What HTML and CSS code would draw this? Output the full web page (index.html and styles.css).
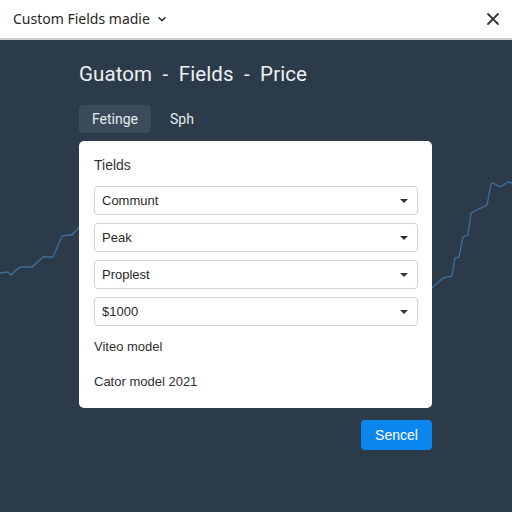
FILE: index.html
```html
<!DOCTYPE html>
<html>
<head>
<meta charset="utf-8">
<link rel="stylesheet" href="styles.css">
</head>
<body>
<header class="topbar">
  <div class="topbar-title">Custom Fields madie
    <svg class="chev" width="10" height="6" viewBox="0 0 10 6"><path d="M1.5 1.2 L5 4.6 L8.5 1.2" fill="none" stroke="#333" stroke-width="1.6"/></svg>
  </div>
  <svg class="close" width="14" height="14" viewBox="0 0 14 14"><path d="M2 2 L12 12 M12 2 L2 12" stroke="#333" stroke-width="1.8" stroke-linecap="round"/></svg>
</header>
<main class="main">
  <svg class="chart" width="512" height="472" viewBox="0 40 512 472" preserveAspectRatio="none">
    <polyline fill="none" stroke="#3f6f99" stroke-width="1.3" points="0,273 8,272 11,275 20,267 32,267 43,257 53,257 62,236 68,235 72,235 80,226"/>
    <polyline fill="none" stroke="#3f6f99" stroke-width="1.3" points="430,289 433,287 443,278 452,276 455,258 459,257 463,237 468,235 471,213 487,205 491,184 493,183 500,187 508,182 512,183"/>
  </svg>
  <div class="content">
    <h1 class="title">Guatom &nbsp;-&nbsp; Fields &nbsp;-&nbsp; Price</h1>
    <nav class="tabs">
      <span class="tab active">Fetinge</span>
      <span class="tab">Sph</span>
    </nav>
    <section class="card">
      <div class="card-label">Tields</div>
      <div class="select"><span>Communt</span><i class="caret"></i></div>
      <div class="select"><span>Peak</span><i class="caret"></i></div>
      <div class="select"><span>Proplest</span><i class="caret"></i></div>
      <div class="select"><span>$1000</span><i class="caret"></i></div>
      <div class="line first">Viteo model</div>
      <div class="line">Cator model 2021</div>
    </section>
    <div class="actions">
      <button class="btn">Sencel</button>
    </div>
  </div>
</main>
</body>
</html>
```

FILE: styles.css
```css
html, body {
  margin: 0;
  padding: 0;
  width: 512px;
  height: 512px;
  overflow: hidden;
  background: #2c3b4a;
}
body {
  font-family: "Liberation Sans", Arial, sans-serif;
  display: flex;
  flex-direction: column;
}
.topbar {
  height: 38px;
  background: #ffffff;
  border-bottom: 2px solid #c9ced3;
  display: flex;
  align-items: center;
  justify-content: space-between;
  padding: 0 13px 0 13px;
  flex-shrink: 0;
}
.topbar-title {
  font-family: "Noto Sans", "Open Sans", sans-serif;
  font-size: 14px;
  color: #262626;
  display: flex;
  align-items: center;
  gap: 7px;
  margin-top: -1px;
}
.chev { margin-top: 1px; }
.close { margin-right: -1px; }
.main {
  position: relative;
  flex: 1;
  background: #2c3b4a;
}
.chart {
  position: absolute;
  left: 0;
  top: 0;
  z-index: 0;
}
.content {
  position: relative;
  z-index: 1;
  padding: 0 80px 0 79px;
  display: flex;
  flex-direction: column;
}
.title {
  font-family: "Roboto", "Noto Sans", sans-serif;
  font-weight: 400;
  font-size: 20.5px;
  color: #eef1f4;
  margin: 21px 0 0 0;
  line-height: 26px;
  letter-spacing: 0.1px;
  white-space: nowrap;
}
.tabs {
  display: flex;
  gap: 6px;
  margin-top: 18px;
}
.tab {
  font-family: "Roboto", "Noto Sans", sans-serif;
  font-size: 14px;
  color: #e6eaee;
  padding: 0 13px;
  height: 28px;
  line-height: 28px;
  border-radius: 4px;
}
.tab.active {
  background: #3b4b5b;
}
.card {
  margin-top: 8px;
  background: #ffffff;
  border-radius: 5px;
  padding: 15px 14px 15px 15px;
  display: flex;
  flex-direction: column;
  gap: 8px;
  height: 237px;
}
.card-label {
  font-size: 14px;
  color: #333;
  line-height: 18px;
  margin-bottom: 4px;
}
.select {
  height: 27px;
  border: 1px solid #cfd2d6;
  border-radius: 4px;
  display: flex;
  align-items: center;
  justify-content: space-between;
  padding: 0 9px 0 7px;
  font-size: 13px;
  color: #2a2a2a;
}
.caret {
  width: 0;
  height: 0;
  border-left: 4px solid transparent;
  border-right: 4px solid transparent;
  border-top: 4px solid #333;
}
.line {
  font-size: 13px;
  color: #2f2f2f;
  line-height: 18px;
}
.line.first { margin-top: 4px; }
.line + .line { margin-top: 9px; }
.actions {
  display: flex;
  justify-content: flex-end;
  margin-top: 12px;
}
.btn {
  font-family: "Liberation Sans", Arial, sans-serif;
  font-size: 14px;
  color: #ffffff;
  background: #0b86ef;
  border: none;
  border-radius: 4px;
  width: 71px;
  height: 30px;
  padding: 0;
}
```
